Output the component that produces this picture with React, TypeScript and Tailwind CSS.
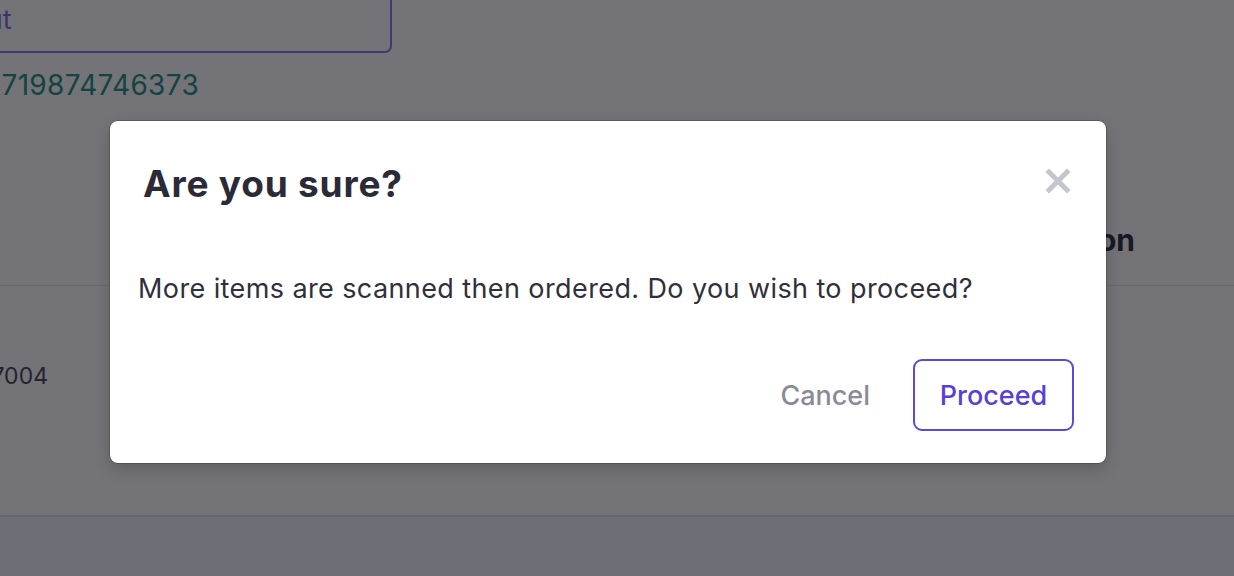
import React from 'react';

function CloseIcon() {
  return (
    <svg width="26" height="26" viewBox="0 0 26 26" className="text-[#c5c6cc]">
      <path d="M4 4 L22 22 M22 4 L4 22" stroke="currentColor" strokeWidth="5" strokeLinecap="square" />
    </svg>
  );
}

export default function App() {
  return (
    <div className="relative h-[576px] w-[1234px] overflow-hidden bg-white font-['Inter',sans-serif]">
      {/* page under the dialog */}
      <div className="flex h-full flex-col">
        <div className="-mt-[13px] flex h-[66px] w-[462px] -ml-[70px] items-center rounded-b-[7px] rounded-r-[7px] border-2 border-[#7f6ff0] pl-[15px]">
          <span className="text-[27px] text-[#7563e6]">Input</span>
        </div>
        <div className="mt-[19px] flex w-[199px] justify-end whitespace-nowrap text-[28px] leading-[26px] tracking-[0.3px] text-[#0f8a72]">
          35719874746373
        </div>

        {/* table header */}
        <div className="mt-[98px] flex h-[90px] items-center justify-end border-b border-[#e3e3e6] pr-[99px]">
          <span className="text-[30px] font-bold text-[#202028]">Action</span>
        </div>
        {/* table row */}
        <div className="flex h-[181px] items-center">
          <div className="flex w-[48px] justify-end whitespace-nowrap text-[23px] text-[#3a3a42]">
            12347004
          </div>
        </div>
        <div className="flex-1" />
        <div className="h-[61px] border-t-2 border-[#e1e1e8] bg-[#f2f2fb]" />
      </div>

      {/* backdrop */}
      <div className="absolute inset-0 bg-[rgba(22,22,30,0.6)]" />

      {/* dialog */}
      <div className="absolute left-[110px] top-[121px] flex w-[996px] flex-col rounded-lg bg-white shadow-[0_0_0_1px_rgba(0,0,0,0.18),0_6px_16px_rgba(0,0,0,0.18)]">
        <div className="flex items-start justify-between pl-[33px] pr-[35px] pt-[41px]">
          <h2 className="text-[37px] font-bold leading-[44px] tracking-[0.8px] text-[#2b2b38]">Are you sure?</h2>
          <button type="button" className="mt-[6px]">
            <CloseIcon />
          </button>
        </div>
        <p className="mt-[67px] pl-[28px] text-[27px] leading-[32px] tracking-[0.4px] text-[#30303c]">
          More items are scanned then ordered. Do you wish to proceed?
        </p>
        <div className="mt-[54px] flex items-center justify-end gap-[43px] pb-8 pr-8">
          <button type="button" className="mt-[3px] text-[27px] font-medium text-[#8a8b98]">
            Cancel
          </button>
          <button
            type="button"
            className="flex h-[72px] w-[161px] items-center justify-center rounded-[9px] border-2 border-[#5b48dc] pt-[2px] text-[27px] font-medium text-[#5a3fd6]"
          >
            Proceed
          </button>
        </div>
      </div>
    </div>
  );
}
